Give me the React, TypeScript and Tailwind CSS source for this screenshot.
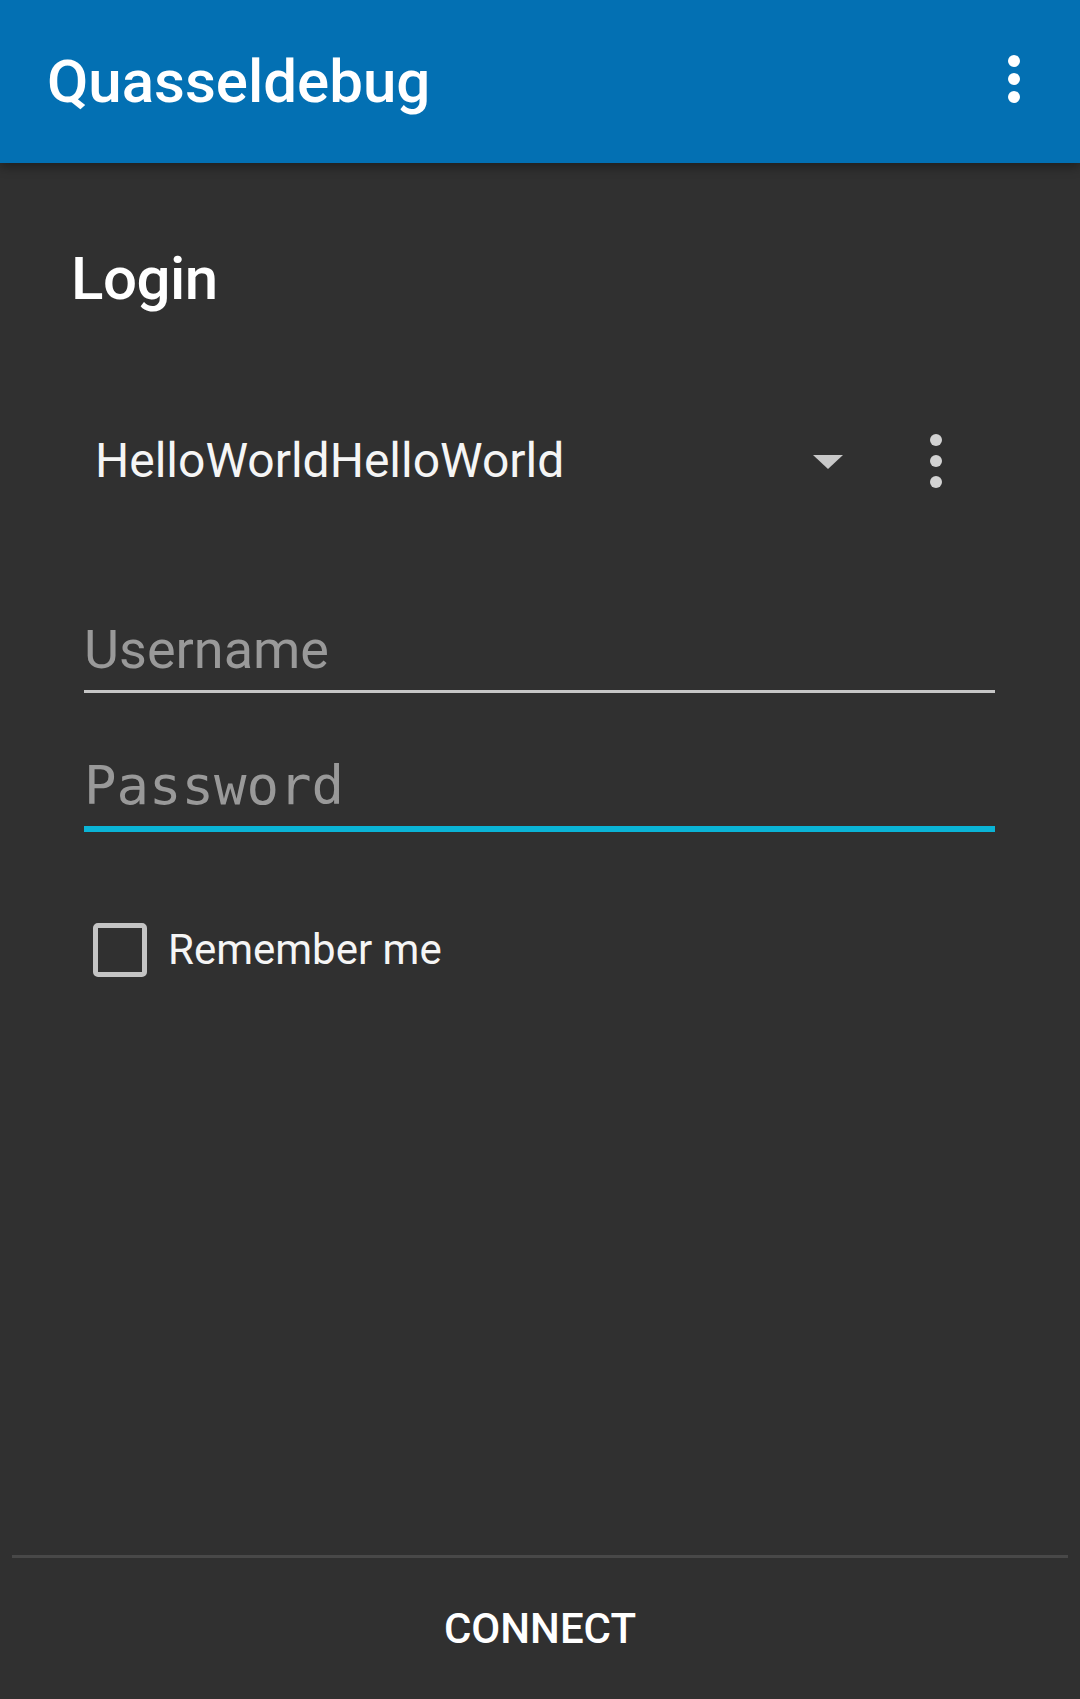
import React from "react";

const roboto = { fontFamily: "Roboto, 'Liberation Sans', sans-serif" };

function OverflowDots({ color, gap }: { color: string; gap: number }) {
  const h = 12 + gap * 2;
  return (
    <svg width="24" height={h} viewBox={`0 0 24 ${h}`}>
      <circle cx="12" cy="6" r="6" fill={color} />
      <circle cx="12" cy={6 + gap} r="6" fill={color} />
      <circle cx="12" cy={6 + gap * 2} r="6" fill={color} />
    </svg>
  );
}

export default function App() {
  return (
    <div
      className="min-h-screen flex flex-col bg-[#303030] text-white"
      style={roboto}
    >
      {/* Toolbar */}
      <header className="relative z-10 h-[163px] shrink-0 bg-[#0370b3] flex items-center justify-between pl-[47px] pr-[54px] shadow-[0_4px_10px_rgba(0,0,0,0.35)]">
        <h1 className="text-[60px] leading-[60px] font-medium">Quasseldebug</h1>
        <div className="-mt-[5px]">
          <OverflowDots color="#ffffff" gap={18} />
        </div>
      </header>

      {/* Login form */}
      <main className="flex-1 flex flex-col pl-[71px] pr-[85px]">
        <h2 className="mt-[85px] text-[60px] leading-[62px] font-medium tracking-[-0.5px]">Login</h2>

        {/* Core account spinner */}
        <div className="mt-[103px] ml-[13px] h-[96px] flex items-center">
          <span className="flex-1 pl-[11px] text-[48px] leading-[48px] text-[#f5f5f5]">
            HelloWorldHelloWorld
          </span>
          <svg width="30" height="14" viewBox="0 0 30 14" className="mt-[1px]">
            <polygon points="0,0 30,0 15,14" fill="#c8c8c8" />
          </svg>
          <div className="ml-[81px] mr-[47px]">
            <OverflowDots color="#d2d2d2" gap={21} />
          </div>
        </div>

        {/* Username */}
        <div className="mt-[114px] ml-[13px] border-b-[3px] border-[#c6c6c6] pb-[13px]">
          <span className="block text-[54px] leading-[54px] text-[#999999]">
            Username
          </span>
        </div>

        {/* Password */}
        <div className="mt-[66px] ml-[13px] border-b-[6px] border-[#0ab4d6] pb-[13px]">
          <span
            className="block text-[54px] leading-[54px] text-[#999999]"
            style={{ fontFamily: "'DejaVu Sans Mono', 'Liberation Mono', monospace" }}
          >
            Password
          </span>
        </div>

        {/* Remember me */}
        <label className="mt-[91px] ml-[22px] flex items-center gap-[21px]">
          <span className="w-[54px] h-[54px] rounded-[5px] border-[5px] border-[#c4c4c4]" />
          <span className="text-[42px] leading-[42px] text-[#f5f5f5]">Remember me</span>
        </label>
      </main>

      {/* Connect button bar */}
      <footer className="shrink-0 flex flex-col">
        <div className="mx-[12px] h-[3px] bg-[#484848]" />
        <button className="h-[141px] flex items-center justify-center text-[42px] leading-[42px] font-medium text-white">
          CONNECT
        </button>
      </footer>
    </div>
  );
}
